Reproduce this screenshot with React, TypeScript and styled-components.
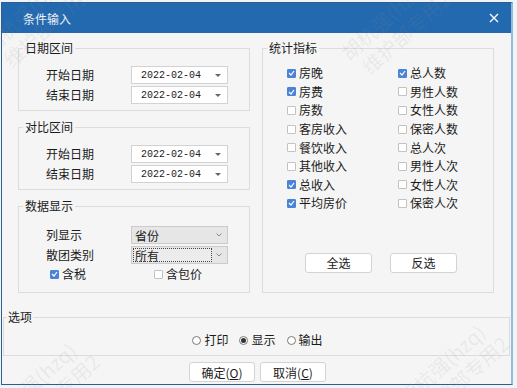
import React from 'react'
import styled, { createGlobalStyle } from 'styled-components'

const GlobalStyle = createGlobalStyle`
  html, body {
    margin: 0;
    padding: 0;
    background: #f1f4f7;
  }
  body {
    font-family: 'Noto Sans CJK SC', 'Noto Sans', sans-serif;
    font-size: 12px;
    color: #1b1b1b;
  }
`

const Page = styled.div`
  position: relative;
  width: 517px;
  height: 388px;
  overflow: hidden;
  padding-top: 2px;
  padding-left: 1px;
  box-sizing: border-box;
`

const Window = styled.div`
  box-sizing: border-box;
  width: 512px;
  height: 383px;
  display: flex;
  flex-direction: column;
  background: #f5f5f5;
  border: 1px solid #2d5d92;
  border-right: 2px solid #98b9df;
`

const TitleBar = styled.div`
  height: 30px;
  flex: none;
  display: flex;
  align-items: center;
  justify-content: space-between;
  padding: 0 10px 0 21px;
  background: #2369b0;
  color: #eef3f9;
  font-size: 12px;
`

const CloseButton = styled.div`
  width: 14px;
  height: 14px;
  display: flex;
  align-items: center;
  justify-content: center;
`

const Body = styled.div`
  flex: 1;
  display: flex;
  flex-direction: column;
  padding: 8px 0 0 0;
`

const TopGrid = styled.div`
  display: grid;
  grid-template-columns: 232px 232px;
  column-gap: 12px;
  padding-left: 16px;
`

const Column = styled.div`
  display: flex;
  flex-direction: column;
  gap: 9px;
`

const Group = styled.fieldset<{ $top?: number; $bottom?: number }>`
  margin: 0;
  min-width: 0;
  box-sizing: border-box;
  border: 1px solid #dcdcdc;
  padding: ${(p) => p.$top ?? 11}px 0 ${(p) => p.$bottom ?? 6}px 0;
`

const GroupInner = styled.div<{ $left: number }>`
  padding-left: ${(p) => p.$left}px;
`

const Legend = styled.legend`
  margin-left: 4px;
  padding: 0 2px;
  font-size: 12px;
  line-height: 14px;
  color: #1b1b1b;
`

const FieldRow = styled.div<{ $gap?: number }>`
  display: flex;
  align-items: center;
  height: 18px;
  & + & {
    margin-top: ${(p) => p.$gap ?? 3}px;
  }
`

const FieldLabel = styled.span`
  width: 85px;
  flex: none;
  line-height: 18px;
`

const DateBox = styled.div`
  box-sizing: border-box;
  width: 97px;
  height: 18px;
  display: flex;
  align-items: center;
  justify-content: space-between;
  padding: 0 6px 0 9px;
  background: #ffffff;
  border: 1px solid #d2d2d2;
  font-family: 'Liberation Mono', 'DejaVu Sans Mono', monospace;
  font-size: 10px;
  color: #222;
`

const DropTriangle = styled.span`
  width: 0;
  height: 0;
  border-left: 3px solid transparent;
  border-right: 3px solid transparent;
  border-top: 3px solid #666;
`

const SelectBox = styled.div`
  box-sizing: border-box;
  width: 97px;
  height: 18px;
  display: flex;
  align-items: center;
  justify-content: space-between;
  padding: 0 5px 0 1px;
  background: #e6e6e6;
  border: 1px solid #cbcbcb;
`

const SelectValue = styled.span<{ $focused?: boolean }>`
  box-sizing: border-box;
  flex: 1;
  height: 14px;
  line-height: 13px;
  padding-left: 1px;
  margin-right: 4px;
  border: 1px dotted ${(p) => (p.$focused ? '#444' : 'transparent')};
  background: ${(p) => (p.$focused ? '#ececec' : 'transparent')};
`

const CheckRow = styled.div`
  display: flex;
  height: 16px;
  margin-top: 2px;
  padding-left: 4px;
`

const CheckItem = styled.label<{ $width?: number }>`
  display: flex;
  align-items: center;
  gap: 3px;
  width: ${(p) => (p.$width ? `${p.$width}px` : 'auto')};
  line-height: 16px;
  white-space: nowrap;
`

const Box = styled.span<{ $on?: boolean }>`
  box-sizing: border-box;
  width: 9px;
  height: 9px;
  flex: none;
  border-radius: 1px;
  display: flex;
  align-items: center;
  justify-content: center;
  background: ${(p) => (p.$on ? '#4a84d6' : '#ffffff')};
  border: 1px solid ${(p) => (p.$on ? '#4a84d6' : '#c2c2c2')};
`

const StatGrid = styled.div`
  display: grid;
  grid-template-columns: 111px 100px;
  grid-auto-rows: 18.6px;
`

const ButtonRow = styled.div<{ $gap: number }>`
  display: flex;
  gap: ${(p) => p.$gap}px;
  margin-top: 40px;
  padding-left: 18px;
`

const Button = styled.button<{ $w: number }>`
  box-sizing: border-box;
  width: ${(p) => p.$w}px;
  height: 20px;
  padding: 0;
  background: #ffffff;
  border: 1px solid #d3d3d3;
  border-radius: 3px;
  font-family: 'Noto Sans CJK SC', sans-serif;
  font-size: 12px;
  color: #1b1b1b;
`

const OptionsGroup = styled(Group)`
  margin: 17px 1px 0 1px;
  padding: 9px 0 8px 0;
`

const OptionsLegend = styled(Legend)`
  margin-left: 3px;
  padding: 0 1px;
`

const RadioRow = styled.div`
  display: flex;
  justify-content: center;
  gap: 11px;
  height: 14px;
  padding-left: 2px;
`

const RadioItem = styled.label`
  display: flex;
  align-items: center;
  gap: 3px;
  line-height: 14px;
`

const Circle = styled.span<{ $on?: boolean }>`
  box-sizing: border-box;
  width: 9px;
  height: 9px;
  border-radius: 50%;
  border: 1px solid #7a7a7a;
  background: #fff;
  display: flex;
  align-items: center;
  justify-content: center;
  &::after {
    content: '';
    width: 5px;
    height: 5px;
    border-radius: 50%;
    background: ${(p) => (p.$on ? '#333' : 'transparent')};
  }
`

const FooterButtons = styled.div`
  display: flex;
  justify-content: center;
  gap: 5px;
  margin-top: 6px;
  padding-left: 2px;
`

const Key = styled.span`
  text-decoration: underline;
`

const Watermark = styled.div<{ $x: number; $y: number }>`
  position: absolute;
  left: ${(p) => p.$x}px;
  top: ${(p) => p.$y}px;
  transform-origin: 0 0;
  transform: rotate(-42deg);
  font-size: 20px;
  line-height: 24px;
  color: rgba(140, 140, 140, 0.12);
  white-space: nowrap;
  pointer-events: none;
  & > div + div {
    padding-left: 6px;
  }
`

const Tick = () => (
  <svg width="7" height="6" viewBox="0 0 7 6">
    <path d="M1 3 L3 5 L6 1" stroke="#fff" strokeWidth="1.2" fill="none" />
  </svg>
)

const Check = ({ on, label, width }: { on?: boolean; label: string; width?: number }) => (
  <CheckItem $width={width}>
    <Box $on={on}>{on && <Tick />}</Box>
    {label}
  </CheckItem>
)

const stats: [string, boolean, string, boolean][] = [
  ['房晚', true, '总人数', true],
  ['房费', true, '男性人数', false],
  ['房数', false, '女性人数', false],
  ['客房收入', false, '保密人数', false],
  ['餐饮收入', false, '总人次', false],
  ['其他收入', false, '男性人次', false],
  ['总收入', true, '女性人次', false],
  ['平均房价', true, '保密人次', false],
]

const DateField = ({ label }: { label: string }) => (
  <FieldRow>
    <FieldLabel>{label}</FieldLabel>
    <DateBox>
      2022-02-04
      <DropTriangle />
    </DateBox>
  </FieldRow>
)

const Chevron = () => (
  <svg width="6" height="4" viewBox="0 0 6 4">
    <path d="M0.5 0.5 L3 3 L5.5 0.5" stroke="#8a8a8a" strokeWidth="1" fill="none" />
  </svg>
)

// watermark stamps over the dialog
const marks = [
  { x: -22, y: 40 },
  { x: 336, y: 47 },
  { x: -15, y: 410 },
  { x: 394, y: 392 },
]

export default function App() {
  return (
    <Page>
      <GlobalStyle />
      <Window>
        <TitleBar>
          <span>条件输入</span>
          <CloseButton>
            <svg width="10" height="10" viewBox="0 0 10 10">
              <path d="M1 1 L9 9 M9 1 L1 9" stroke="#fff" strokeWidth="1.3" />
            </svg>
          </CloseButton>
        </TitleBar>
        <Body>
          <TopGrid>
            <Column>
              <Group>
                <Legend>日期区间</Legend>
                <GroupInner $left={27}>
                  <DateField label="开始日期" />
                  <DateField label="结束日期" />
                </GroupInner>
              </Group>
              <Group>
                <Legend>对比区间</Legend>
                <GroupInner $left={27}>
                  <DateField label="开始日期" />
                  <DateField label="结束日期" />
                </GroupInner>
              </Group>
              <Group $top={13} $bottom={10}>
                <Legend>数据显示</Legend>
                <GroupInner $left={27}>
                  <FieldRow $gap={2}>
                    <FieldLabel>列显示</FieldLabel>
                    <SelectBox>
                      <SelectValue>省份</SelectValue>
                      <Chevron />
                    </SelectBox>
                  </FieldRow>
                  <FieldRow $gap={2}>
                    <FieldLabel>散团类别</FieldLabel>
                    <SelectBox>
                      <SelectValue $focused>所有</SelectValue>
                      <Chevron />
                    </SelectBox>
                  </FieldRow>
                  <CheckRow>
                    <Check on label="含税" width={104} />
                    <Check label="含包价" />
                  </CheckRow>
                </GroupInner>
              </Group>
            </Column>
            <Group $top={9} $bottom={0}>
              <Legend>统计指标</Legend>
              <GroupInner $left={24}>
                <StatGrid>
                  {stats.map(([a, aOn, b, bOn]) => (
                    <React.Fragment key={a}>
                      <Check on={aOn} label={a} />
                      <Check on={bOn} label={b} />
                    </React.Fragment>
                  ))}
                </StatGrid>
                <ButtonRow $gap={18}>
                  <Button $w={67}>全选</Button>
                  <Button $w={67}>反选</Button>
                </ButtonRow>
              </GroupInner>
            </Group>
          </TopGrid>
          <OptionsGroup>
            <OptionsLegend>选项</OptionsLegend>
            <RadioRow>
              <RadioItem>
                <Circle />
                打印
              </RadioItem>
              <RadioItem>
                <Circle $on />
                显示
              </RadioItem>
              <RadioItem>
                <Circle />
                输出
              </RadioItem>
            </RadioRow>
          </OptionsGroup>
          <FooterButtons>
            <Button $w={66}>
              确定(<Key>O</Key>)
            </Button>
            <Button $w={66}>
              取消(<Key>C</Key>)
            </Button>
          </FooterButtons>
        </Body>
      </Window>
      {marks.map((m, i) => (
        <Watermark key={i} $x={m.x} $y={m.y}>
          <div>胡杭强(hzq)</div>
          <div>维护部专用2</div>
        </Watermark>
      ))}
    </Page>
  )
}
